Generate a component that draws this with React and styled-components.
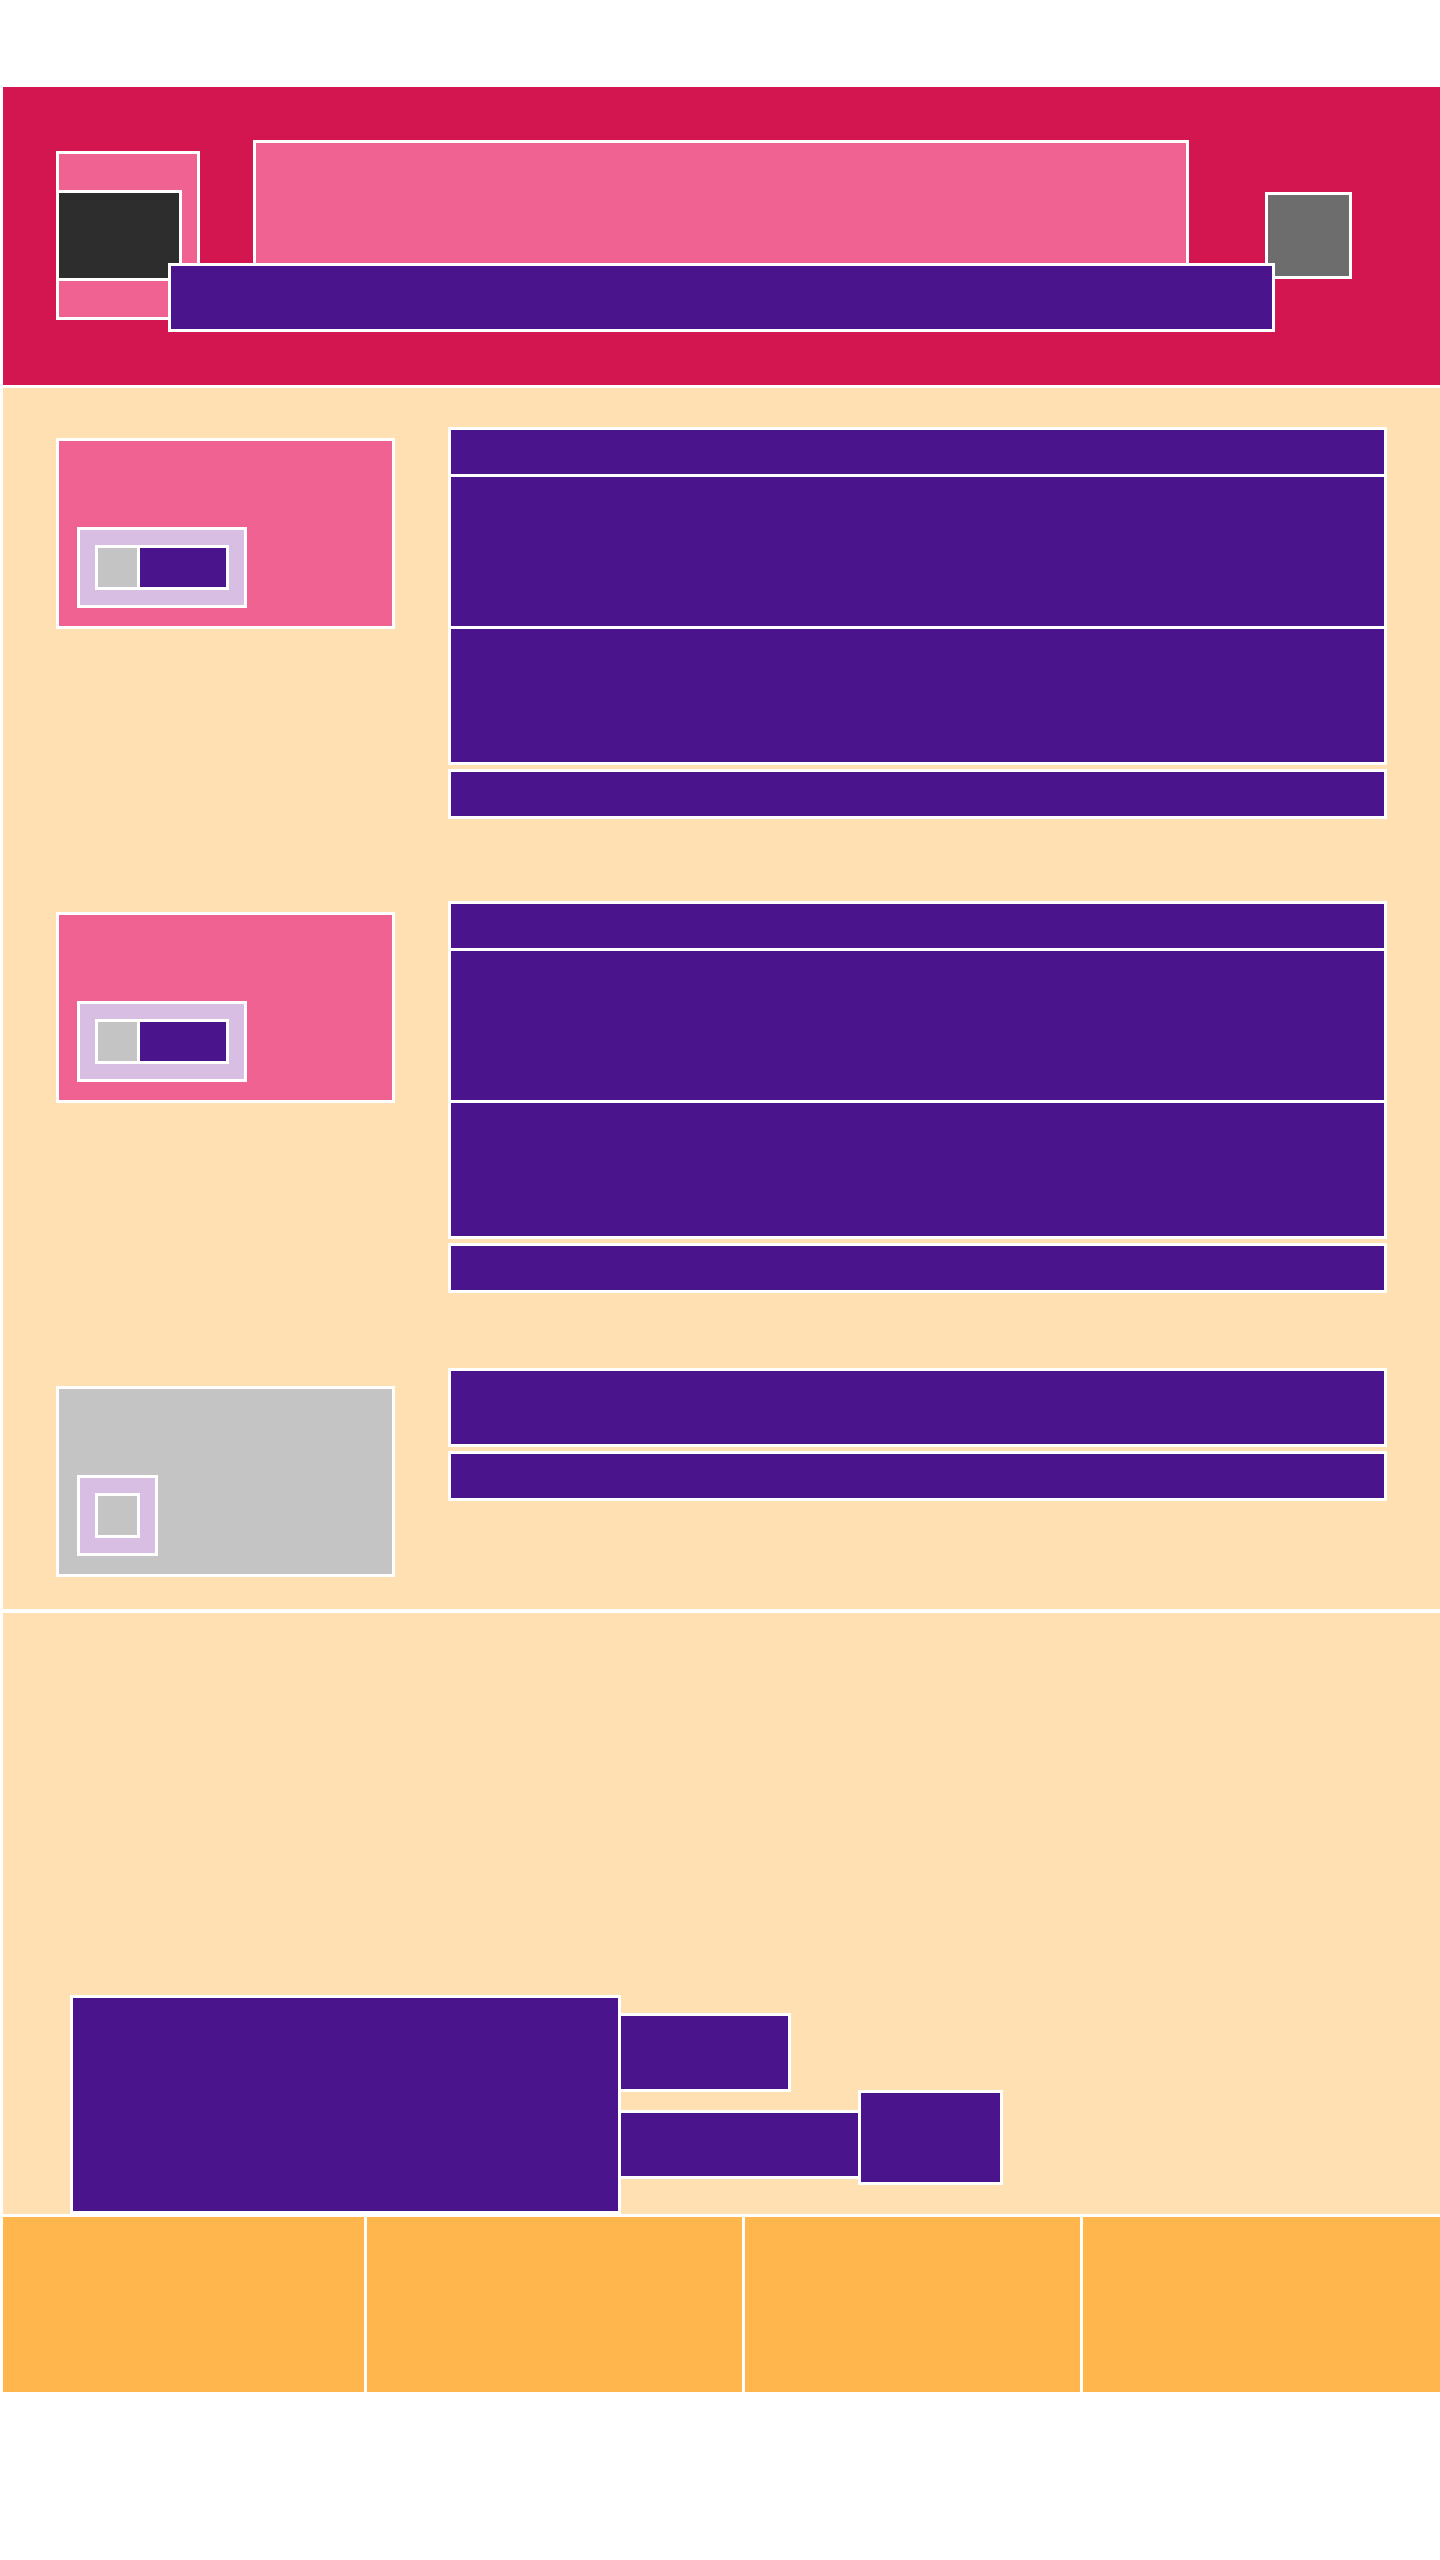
import React from "react";
import styled, { createGlobalStyle } from "styled-components";

const GlobalStyle = createGlobalStyle`
  *, *::before, *::after {
    box-sizing: border-box;
  }
  body {
    margin: 0;
    background: #ffffff;
    font-family: "Liberation Sans", Arial, sans-serif;
  }
`;

const CRIMSON = "#d31550";
const PINK = "#f06292";
const PURPLE = "#4a148c";
const PEACH = "#ffe0b2";
const ORANGE = "#ffb74d";
const LAVENDER = "#d9bee3";
const SILVER = "#c4c4c4";

export default function App() {
  const sections = [
    { height: 474, colTop: 39, card: PINK, toggle: true, stack: [44, 149, 133], bars: [44] },
    { height: 474, colTop: 39, card: PINK, toggle: true, stack: [44, 149, 133], bars: [44] },
    { height: 273, colTop: 32, card: SILVER, toggle: false, stack: null, bars: [73, 44] },
  ];

  return (
    <>
      <GlobalStyle />
      <Frame>
        <Header>
          <HeaderRow>
            <Logo>
              <LogoMark />
            </Logo>
            <Title />
            <Avatar />
          </HeaderRow>
          <Nav />
        </Header>

        <Main>
          {sections.map((s, i) => (
            <Section key={i} $height={s.height}>
              <Card $bg={s.card}>
                <ToggleWrap>
                  {s.toggle ? (
                    <Switch>
                      <Knob />
                      <Track />
                    </Switch>
                  ) : (
                    <Checkbox />
                  )}
                </ToggleWrap>
              </Card>
              <Column $top={s.colTop}>
                {s.stack && (
                  <Stack>
                    {s.stack.map((h, j) => (
                      <StackItem key={j} $h={h} />
                    ))}
                  </Stack>
                )}
                {s.bars.map((h, j) => (
                  <Bar key={j} $h={h} />
                ))}
              </Column>
            </Section>
          ))}
        </Main>

        <Promo>
          <Hero />
          <SideGroup>
            <Tile />
            <TileRow>
              <WideTile />
              <SmallTile />
            </TileRow>
          </SideGroup>
        </Promo>

        <Footer>
          <FooterCell $w={361} />
          <FooterCell $w={375} />
          <FooterCell $w={335} />
          <FooterCell />
        </Footer>
      </Frame>
    </>
  );
}

const Frame = styled.div`
  margin: 87px 0 0 3px;
  display: flex;
  flex-direction: column;
`;

const Header = styled.header`
  position: relative;
  height: 301px;
  background: ${CRIMSON};
  border-bottom: 3px solid #fff;
`;

const HeaderRow = styled.div`
  display: flex;
  align-items: flex-start;
  padding-left: 53px;
`;

const Logo = styled.div`
  margin-top: 64px;
  width: 144px;
  height: 169px;
  border: 3px solid #fff;
  background: ${PINK};
  padding-top: 36px;
`;

const LogoMark = styled.div`
  margin-left: -3px;
  width: 126px;
  height: 91px;
  border: 3px solid #fff;
  background: #2d2d2d;
`;

const Title = styled.div`
  margin: 53px 0 0 53px;
  width: 936px;
  height: 126px;
  border: 3px solid #fff;
  background: ${PINK};
`;

const Avatar = styled.div`
  margin: 105px 0 0 76px;
  width: 87px;
  height: 87px;
  border: 3px solid #fff;
  background: #6d6d6d;
`;

const Nav = styled.nav`
  position: absolute;
  left: 165px;
  top: 176px;
  width: 1107px;
  height: 69px;
  border: 3px solid #fff;
  background: ${PURPLE};
`;

const Main = styled.main`
  background: ${PEACH};
  border-bottom: 4px solid #fff;
`;

const Section = styled.section`
  display: flex;
  align-items: flex-start;
  gap: 53px;
  padding-left: 53px;
  height: ${(p) => p.$height}px;
`;

const Card = styled.div`
  margin-top: 50px;
  width: 339px;
  height: 191px;
  border: 3px solid #fff;
  background: ${(p) => p.$bg};
  padding: 86px 0 0 18px;
`;

const ToggleWrap = styled.div`
  display: inline-flex;
  padding: 15px;
  border: 3px solid #fff;
  background: ${LAVENDER};
`;

const Switch = styled.div`
  display: flex;
  width: 134px;
  height: 45px;
  border: 3px solid #fff;
`;

const Knob = styled.div`
  width: 42px;
  background: ${SILVER};
  border-right: 3px solid #fff;
`;

const Track = styled.div`
  flex: 1;
  background: ${PURPLE};
`;

const Checkbox = styled.div`
  width: 45px;
  height: 45px;
  border: 3px solid #fff;
  background: ${SILVER};
`;

const Column = styled.div`
  margin-top: ${(p) => p.$top}px;
  width: 939px;
  display: flex;
  flex-direction: column;
  gap: 4px;
`;

const Stack = styled.div`
  display: flex;
  flex-direction: column;
  gap: 3px;
  border: 3px solid #fff;
  background: #fff;
`;

const StackItem = styled.div`
  height: ${(p) => p.$h}px;
  background: ${PURPLE};
`;

const Bar = styled.div`
  height: ${(p) => p.$h + 6}px;
  border: 3px solid #fff;
  background: ${PURPLE};
`;

const Promo = styled.div`
  display: flex;
  align-items: flex-start;
  height: 601px;
  padding-left: 67px;
  background: ${PEACH};
`;

const Hero = styled.div`
  margin-top: 382px;
  width: 551px;
  height: 219px;
  border: 3px solid #fff;
  background: ${PURPLE};
`;

const SideGroup = styled.div`
  margin: 400px 0 0 -3px;
  display: flex;
  flex-direction: column;
  align-items: flex-start;
`;

const Tile = styled.div`
  width: 173px;
  height: 79px;
  border: 3px solid #fff;
  background: ${PURPLE};
`;

const TileRow = styled.div`
  display: flex;
  align-items: flex-start;
  margin-top: -2px;
`;

const WideTile = styled.div`
  margin-top: 20px;
  width: 243px;
  height: 69px;
  border: 3px solid #fff;
  background: ${PURPLE};
`;

const SmallTile = styled.div`
  margin-left: -3px;
  width: 145px;
  height: 95px;
  border: 3px solid #fff;
  background: ${PURPLE};
`;

const Footer = styled.footer`
  display: flex;
  gap: 3px;
  padding-top: 3px;
  background: #fff;
`;

const FooterCell = styled.div`
  height: 175px;
  background: ${ORANGE};
  ${(p) => (p.$w ? `width: ${p.$w}px;` : "flex: 1;")}
`;
